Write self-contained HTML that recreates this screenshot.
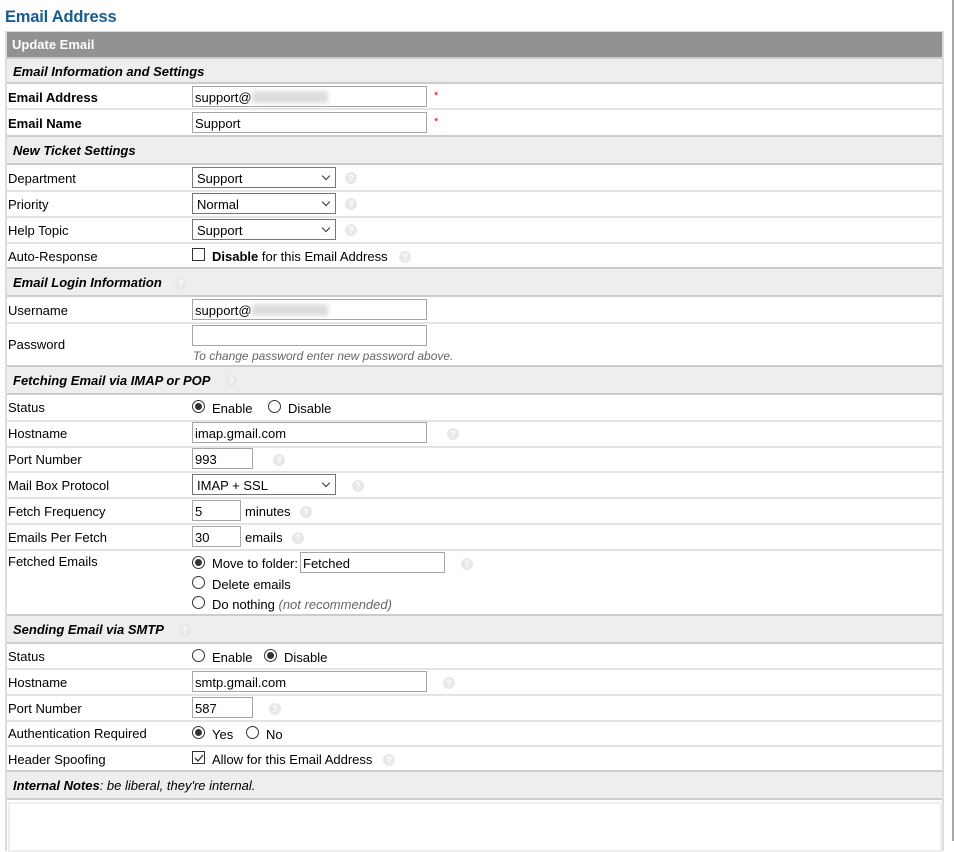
<!DOCTYPE html>
<html><head><meta charset="utf-8"><style>
*{box-sizing:border-box;margin:0;padding:0}
body{width:954px;height:841px;overflow:hidden;background:#fff;font-family:"Liberation Sans",Arial,sans-serif;font-size:13px;color:#000;position:relative}
.a{position:absolute;line-height:16px;white-space:nowrap;margin-top:1px}
.h1{position:absolute;left:5px;top:8px;font-size:16.5px;font-weight:bold;color:#185c8f;letter-spacing:-0.2px}
.vr{position:absolute;right:0;top:0;width:2px;height:841px;background:#a8a8a8}
.tbl{position:absolute;left:5px;top:31px;width:939px;height:820px;border:2px solid #ddd;border-bottom:none}
.bar{position:absolute;left:7px;top:32px;width:935px;height:25px;background:#929292;color:#fff;font-weight:bold;padding:6px 0 0 5px;line-height:14px}
.sec{position:absolute;left:7px;width:935px;background:#eee;border-top:2px solid #ccc;border-bottom:2px solid #ccc;font-weight:bold;font-style:italic;padding-left:6px;padding-top:1px;color:#000}
.ln{position:absolute;left:7px;width:935px;height:2px;background:#e4e4e4}
.in{position:absolute;height:21px;border:1px solid #a6a6a6;background:#fff;padding:3px 0 0 2px;line-height:15px}
.sel{position:absolute;height:21px;border:1px solid #767676;background:#fff;padding:3px 0 0 4px;line-height:15px}
.sel:after{content:"";position:absolute;right:6px;top:5px;width:5px;height:5px;border-right:1px solid #333;border-bottom:1px solid #333;transform:rotate(45deg)}
.q{position:absolute;width:12px;height:12px;border-radius:50%;background:#e8e8e8;color:#fff;font-size:9px;font-weight:bold;text-align:center;line-height:12px}
.r{position:absolute;width:13px;height:13px;border:1px solid #333;border-radius:50%;background:#fff}
.r.on:after{content:"";position:absolute;left:2px;top:2px;width:7px;height:7px;border-radius:50%;background:#333}
.cb{position:absolute;width:13px;height:13px;border:1px solid #333;background:#fff}
.st{position:absolute;color:#e00;font-size:11px}
.blur{display:inline-block;width:76px;height:12px;background:#ddd;vertical-align:-1px;filter:blur(2px)}
</style></head><body>
<div class="h1">Email Address</div>
<div class="vr"></div>
<div class="tbl"></div>
<div class="bar">Update Email</div>

<div class="sec" style="top:57px;height:27px;line-height:23px">Email Information and Settings</div>
<div class="a" style="left:8px;top:89px;font-weight:bold">Email Address</div>
<div class="in" style="left:192px;top:86px;width:235px">support@<span class="blur"></span></div>
<div class="st" style="left:434px;top:90px">*</div>
<div class="ln" style="top:108px"></div>
<div class="a" style="left:8px;top:115px;font-weight:bold">Email Name</div>
<div class="in" style="left:192px;top:112px;width:235px">Support</div>
<div class="st" style="left:434px;top:116px">*</div>

<div class="sec" style="top:135px;height:30px;line-height:26px">New Ticket Settings</div>
<div class="a" style="left:8px;top:170px">Department</div>
<div class="sel" style="left:192px;top:167px;width:144px">Support</div>
<div class="q" style="left:345px;top:172px">?</div>
<div class="ln" style="top:190px"></div>
<div class="a" style="left:8px;top:196px">Priority</div>
<div class="sel" style="left:192px;top:193px;width:144px">Normal</div>
<div class="q" style="left:345px;top:198px">?</div>
<div class="ln" style="top:216px"></div>
<div class="a" style="left:8px;top:222px">Help Topic</div>
<div class="sel" style="left:192px;top:219px;width:144px">Support</div>
<div class="q" style="left:345px;top:224px">?</div>
<div class="ln" style="top:242px"></div>
<div class="a" style="left:8px;top:248px">Auto-Response</div>
<div class="cb" style="left:192px;top:248px"></div>
<div class="a" style="left:212px;top:248px"><b>Disable</b> for this Email Address</div>
<div class="q" style="left:399px;top:251px">?</div>

<div class="sec" style="top:267px;height:30px;line-height:26px">Email Login Information</div>
<div class="q" style="left:175px;top:277px">?</div>
<div class="a" style="left:8px;top:302px">Username</div>
<div class="in" style="left:192px;top:299px;width:235px">support@<span class="blur"></span></div>
<div class="ln" style="top:322px"></div>
<div class="a" style="left:8px;top:336px">Password</div>
<div class="in" style="left:192px;top:325px;width:235px"></div>
<div class="a" style="left:193px;top:347px;font-style:italic;color:#666;font-size:12px">To change password enter new password above.</div>

<div class="sec" style="top:365px;height:30px;line-height:26px">Fetching Email via IMAP or POP</div>
<div class="q" style="left:225px;top:375px">?</div>
<div class="a" style="left:8px;top:399px">Status</div>
<div class="r on" style="left:192px;top:400px"></div><div class="a" style="left:212px;top:400px">Enable</div>
<div class="r" style="left:268px;top:400px"></div><div class="a" style="left:288px;top:400px">Disable</div>
<div class="ln" style="top:420px"></div>
<div class="a" style="left:8px;top:425px">Hostname</div>
<div class="in" style="left:192px;top:422px;width:235px">imap.gmail.com</div>
<div class="q" style="left:447px;top:428px">?</div>
<div class="ln" style="top:446px"></div>
<div class="a" style="left:8px;top:451px">Port Number</div>
<div class="in" style="left:192px;top:448px;width:61px">993</div>
<div class="q" style="left:273px;top:454px">?</div>
<div class="ln" style="top:471px"></div>
<div class="a" style="left:8px;top:477px">Mail Box Protocol</div>
<div class="sel" style="left:192px;top:474px;width:144px">IMAP + SSL</div>
<div class="q" style="left:352px;top:480px">?</div>
<div class="ln" style="top:497px"></div>
<div class="a" style="left:8px;top:503px">Fetch Frequency</div>
<div class="in" style="left:192px;top:500px;width:49px">5</div>
<div class="a" style="left:245px;top:503px">minutes</div>
<div class="q" style="left:300px;top:506px">?</div>
<div class="ln" style="top:523px"></div>
<div class="a" style="left:8px;top:529px">Emails Per Fetch</div>
<div class="in" style="left:192px;top:526px;width:49px">30</div>
<div class="a" style="left:245px;top:529px">emails</div>
<div class="q" style="left:292px;top:532px">?</div>
<div class="ln" style="top:549px"></div>
<div class="a" style="left:8px;top:553px">Fetched Emails</div>
<div class="r on" style="left:192px;top:556px"></div><div class="a" style="left:212px;top:555px">Move to folder:</div>
<div class="in" style="left:300px;top:552px;width:145px">Fetched</div>
<div class="q" style="left:461px;top:558px">?</div>
<div class="r" style="left:192px;top:576px"></div><div class="a" style="left:212px;top:576px">Delete emails</div>
<div class="r" style="left:192px;top:596px"></div><div class="a" style="left:212px;top:596px">Do nothing <i style="color:#666">(not recommended)</i></div>

<div class="sec" style="top:614px;height:30px;line-height:26px">Sending Email via SMTP</div>
<div class="q" style="left:179px;top:624px">?</div>
<div class="a" style="left:8px;top:648px">Status</div>
<div class="r" style="left:192px;top:649px"></div><div class="a" style="left:212px;top:649px">Enable</div>
<div class="r on" style="left:264px;top:649px"></div><div class="a" style="left:284px;top:649px">Disable</div>
<div class="ln" style="top:668px"></div>
<div class="a" style="left:8px;top:674px">Hostname</div>
<div class="in" style="left:192px;top:671px;width:235px">smtp.gmail.com</div>
<div class="q" style="left:443px;top:677px">?</div>
<div class="ln" style="top:694px"></div>
<div class="a" style="left:8px;top:700px">Port Number</div>
<div class="in" style="left:192px;top:697px;width:61px">587</div>
<div class="q" style="left:269px;top:703px">?</div>
<div class="ln" style="top:720px"></div>
<div class="a" style="left:8px;top:725px">Authentication Required</div>
<div class="r on" style="left:192px;top:726px"></div><div class="a" style="left:212px;top:726px">Yes</div>
<div class="r" style="left:246px;top:726px"></div><div class="a" style="left:266px;top:726px">No</div>
<div class="ln" style="top:745px"></div>
<div class="a" style="left:8px;top:751px">Header Spoofing</div>
<div class="cb" style="left:192px;top:751px"></div>
<svg style="position:absolute;left:194px;top:753px" width="10" height="10"><path d="M1 5 L4 8 L9 2" fill="none" stroke="#333" stroke-width="1.3"/></svg>
<div class="a" style="left:212px;top:751px">Allow for this Email Address</div>
<div class="q" style="left:383px;top:754px">?</div>

<div class="sec" style="top:770px;height:30px;line-height:26px"><b>Internal Notes</b><span style="font-weight:normal">: be liberal, they're internal.</span></div>
<div style="position:absolute;left:8px;top:802px;width:934px;height:50px;border:2px solid #eee"></div>
</body></html>
